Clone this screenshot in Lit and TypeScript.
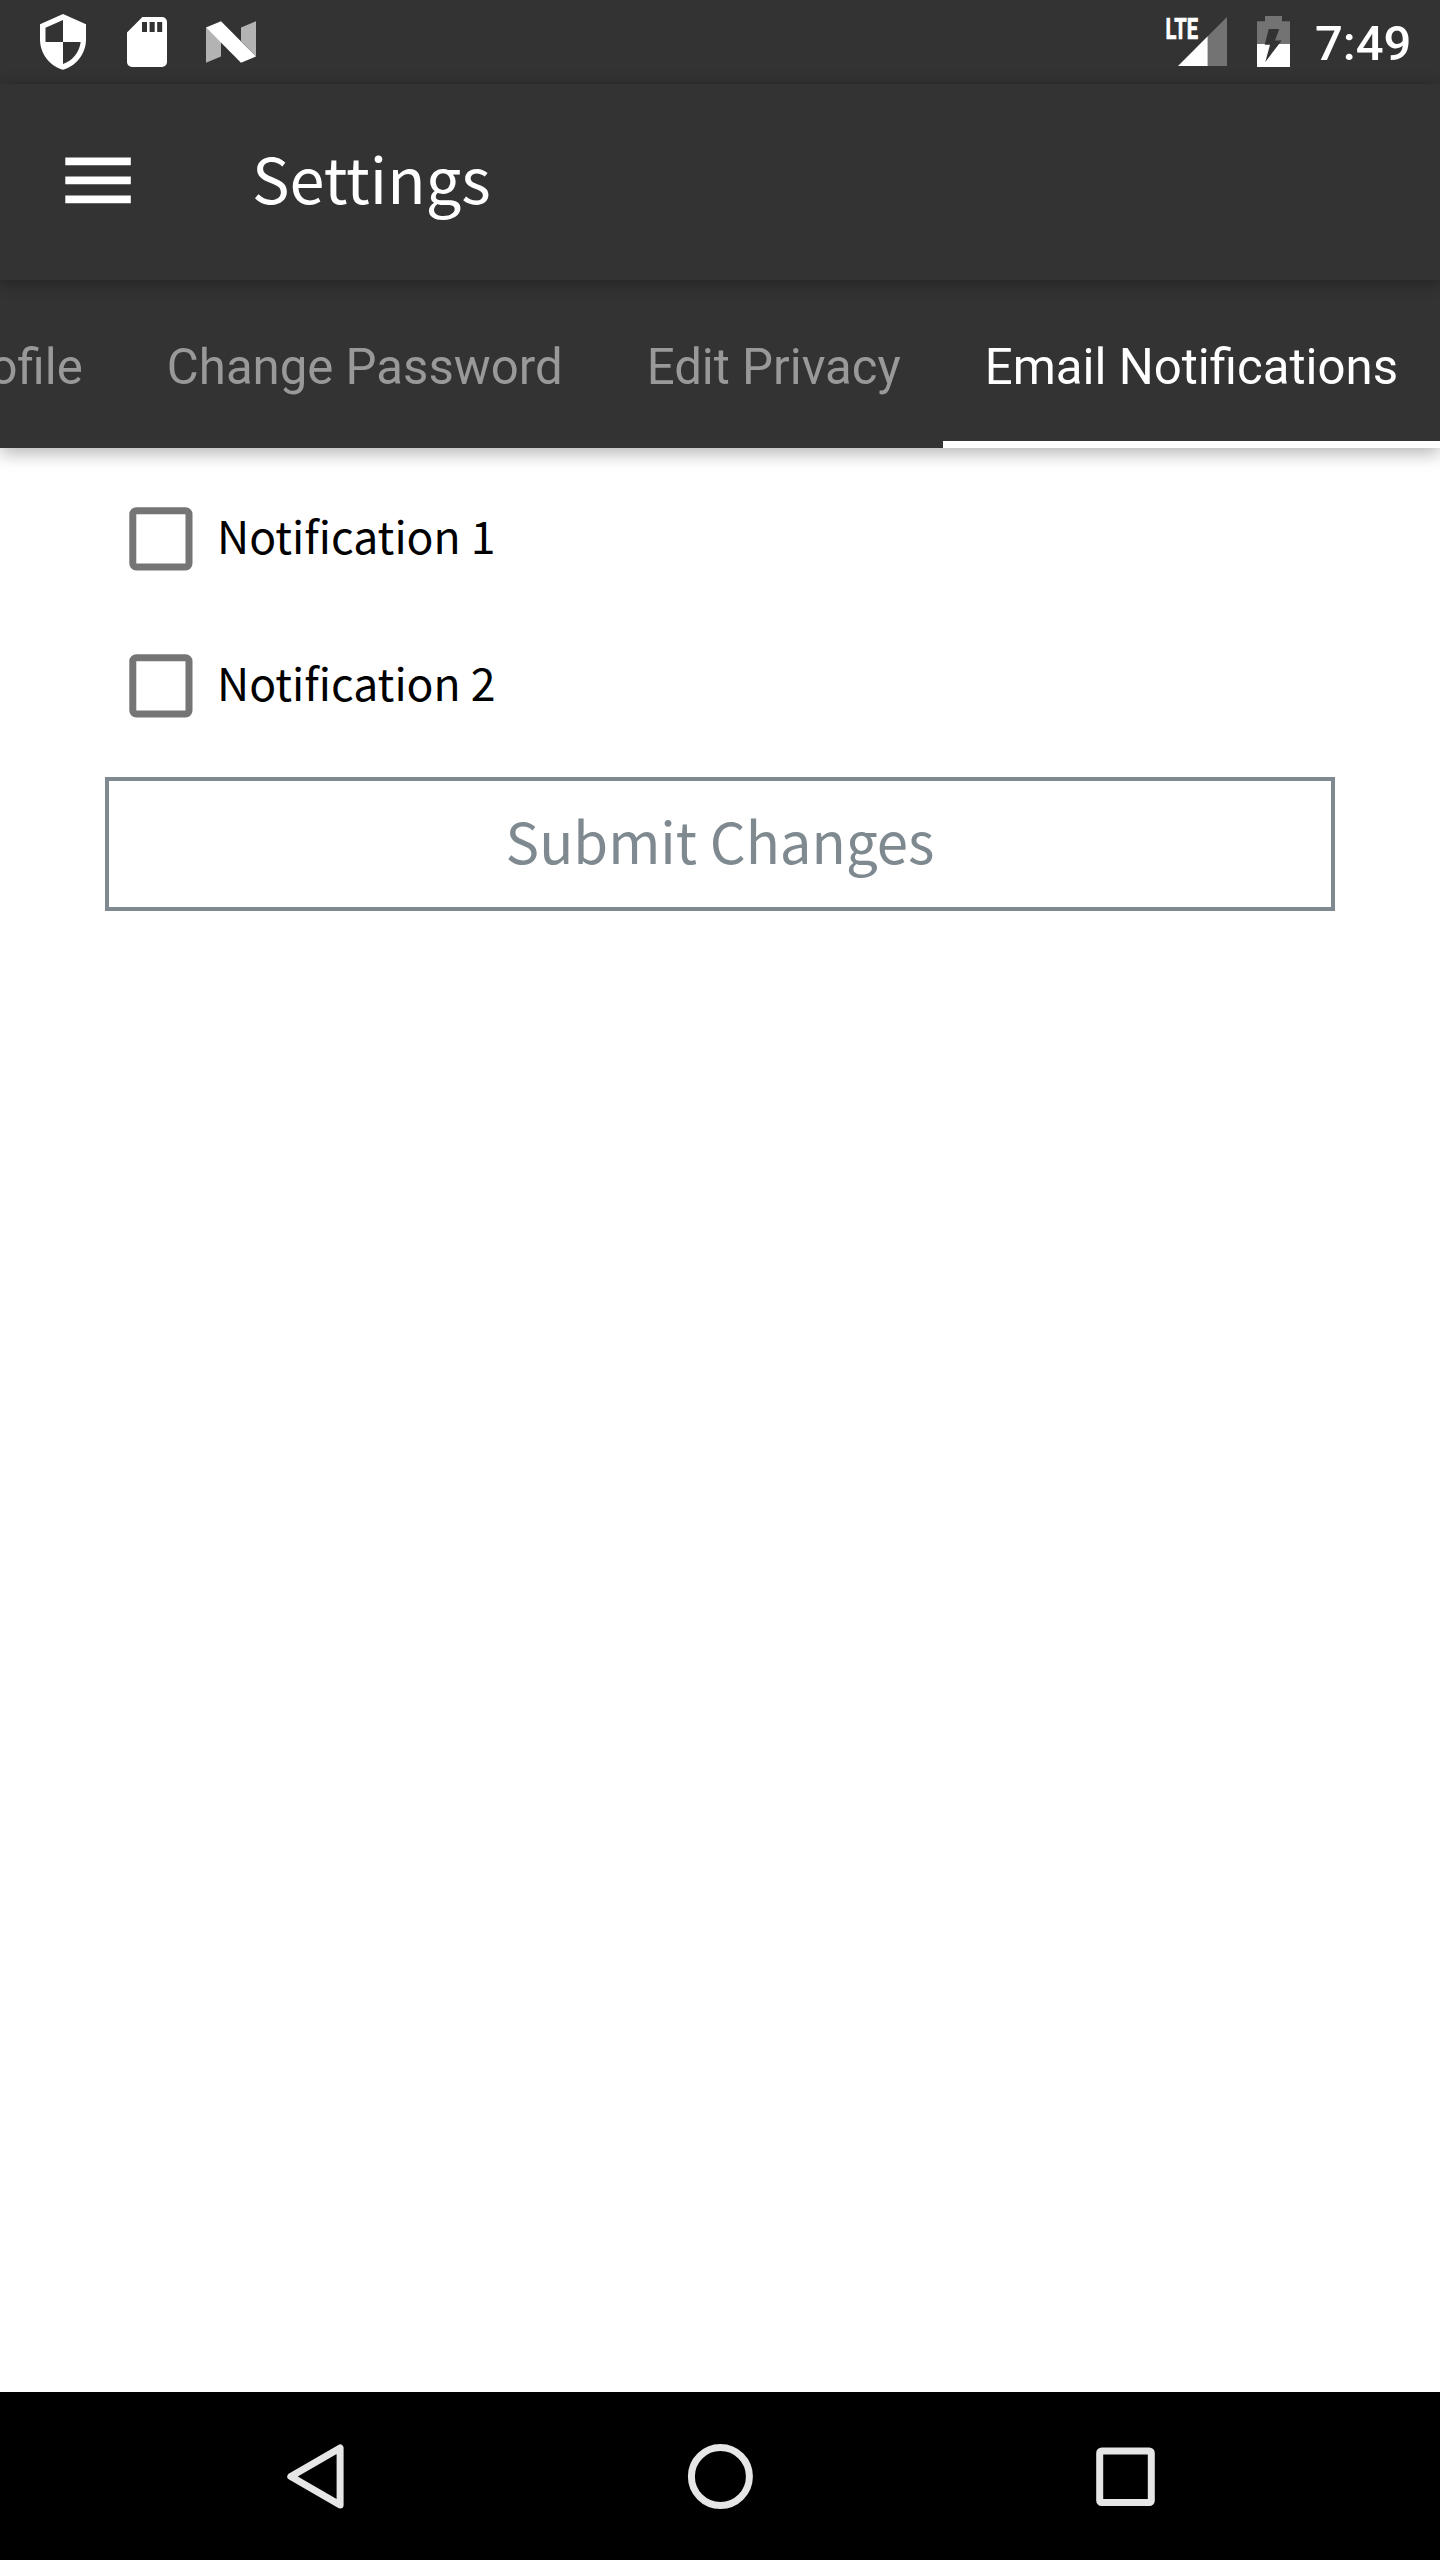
import { LitElement, html, css } from "lit";
import { customElement, state } from "lit/decorators.js";

@customElement("status-bar")
class StatusBar extends LitElement {
  static styles = css`
    :host { display: flex; justify-content: space-between; height: 84px; background: #333; }
    .icons { display: block; }
    .right { display: flex; }
    .lte { font: 700 29.5px Roboto, sans-serif; fill: #fff; stroke: #fff; stroke-width: 0.7px; }
    .clock {
      width: 126px; box-sizing: border-box; padding: 15px 0 0 1px;
      font: 500 49px/58px Roboto, sans-serif; color: #fff; white-space: nowrap;
    }
  `;
  render() {
    return html`
      <svg class="icons" width="280" height="84" viewBox="0 0 280 84">
        <path fill="#fff" fill-rule="evenodd" d="M63 14L86 24.2V39.5C86 53.5 76.3 66 63 69.7C49.7 66 40 53.5 40 39.5V24.2ZM63 20L45.5 27.7V42H63ZM63 42V64C72.5 61 79.2 52.5 80.7 42Z"/>
        <path fill="#fff" fill-rule="evenodd" d="M142.4 17H162a5 5 0 0 1 5 5V62a5 5 0 0 1-5 5H132a5 5 0 0 1-5-5V32.4ZM142 22V32H147V22ZM149.6 22V32H154.7V22ZM157.2 22V32H162.2V22Z"/>
        <path fill="#b3b3b3" d="M206 27.5L221 42V56.5L206 62.7ZM241 27.5L256 21.2V56.5L241 41Z"/>
        <path fill="#fff" d="M206 27.5L221 21.2L256 56.5L241 62.7Z"/>
      </svg>
      <div class="right">
        <svg class="icons" width="151" height="84" viewBox="1163 0 151 84">
          <path fill="#737373" d="M1207.7 36.3L1227 17V66H1207.7Z"/>
          <path fill="#fff" d="M1178 66L1207.7 36.3V66Z"/>
          <text class="lte" x="1165.5" y="39" textLength="32.5" lengthAdjust="spacingAndGlyphs">LTE</text>
          <path fill="#737373" d="M1265 16H1282V21.3H1290V44H1257V21.3H1265Z"/>
          <path fill="#fff" d="M1257 44H1290V67H1257Z"/>
          <path fill="#333" d="M1268.7 29H1279.3L1275 40.5H1281.7L1265.3 62L1270 44.7H1264.7Z"/>
        </svg>
        <div class="clock">7:49</div>
      </div>
    `;
  }
}

@customElement("app-bar")
class AppBar extends LitElement {
  static styles = css`
    :host {
      display: flex; align-items: center; height: 196px; box-sizing: border-box; padding: 0 0 2px 65px;
      background: #333; position: relative; z-index: 2;
      box-shadow: 0 6px 14px rgba(0, 0, 0, 0.16), 0 0 14px rgba(0, 0, 0, 0.18);
    }
    .menu { display: block; margin-right: 121px; }
    .title { margin: 0; padding-bottom: 8px; font: 400 63px/80px "Noto Sans CJK SC", sans-serif; color: #fff; }
  `;
  render() {
    return html`
      <svg class="menu" width="66" height="48" viewBox="0 0 66 48">
        <path fill="#fff" d="M.3 .4H65.8V8.3H.3ZM.3 19.4H65.8V27.3H.3ZM.3 38.4H65.8V46.3H.3Z"/>
      </svg>
      <h1 class="title">Settings</h1>
    `;
  }
}

@customElement("tab-bar")
class TabBar extends LitElement {
  static styles = css`
    :host {
      display: flex; justify-content: flex-end; height: 168px; overflow: hidden; background: #333;
      font: 400 49.15px/58px Roboto, sans-serif; color: #999;
    }
    .tab {
      flex: none; box-sizing: border-box; padding: 58px 42px 0; white-space: nowrap;
      border-bottom: 7px solid transparent;
    }
    .active { color: #fff; border-bottom-color: #fff; }
  `;
  render() {
    const tabs = ["Edit Profile", "Change Password", "Edit Privacy", "Email Notifications"];
    return tabs.map((t, i) => html`<div class="tab ${i === 3 ? "active" : ""}">${t}</div>`);
  }
}

@customElement("nav-bar")
class NavBar extends LitElement {
  static styles = css`
    :host { display: flex; height: 168px; background: #000; }
    .keys { display: block; }
  `;
  render() {
    return html`
      <svg class="keys" width="1440" height="168" viewBox="0 0 1440 168" fill="none" stroke="#e6e6e6" stroke-width="7" stroke-linejoin="round">
        <path d="M340.1 56V113L290.8 84.5Z"/>
        <circle cx="720.4" cy="84.5" r="29"/>
        <rect x="1099.7" y="58.9" width="51.6" height="51.6" rx="2"/>
      </svg>
    `;
  }
}

@customElement("app-root")
class AppRoot extends LitElement {
  static styles = css`
    :host { display: flex; flex-direction: column; width: 1440px; height: 2560px; background: #fff; overflow: hidden; }
    .tabs { position: relative; z-index: 1; box-shadow: 0 6px 16px rgba(0, 0, 0, 0.28); }
    .content { flex: 1; padding: 59px 105px 0; font-family: "Noto Sans CJK SC", sans-serif; }
    .row { display: flex; height: 64px; margin-bottom: 83px; padding-left: 24px; }
    .row.last { margin-bottom: 59px; }
    .box { display: block; width: 64px; height: 64px; margin-right: 24px; }
    .label { font-size: 44.5px; line-height: 56px; color: #000; }
    .submit {
      display: block; width: 1230px; height: 134px; box-sizing: border-box; padding: 0 0 8px;
      border: 4px solid #7f8990; background: #fff; color: #7f8990;
      font: 400 56.35px/118px "Noto Sans CJK SC", sans-serif; text-align: center;
    }
  `;
  @state() items = ["Notification 1", "Notification 2"];
  render() {
    return html`
      <status-bar></status-bar>
      <app-bar></app-bar>
      <tab-bar class="tabs"></tab-bar>
      <main class="content">
        ${this.items.map((label, i) => html`
          <div class="row ${i === this.items.length - 1 ? "last" : ""}">
            <svg class="box" viewBox="0 0 64 64" fill="none" stroke="#757575" stroke-width="7">
              <rect x="3.8" y="3.8" width="56.2" height="56.2" rx="3.5"/>
            </svg>
            <span class="label">${label}</span>
          </div>`)}
        <button class="submit">Submit Changes</button>
      </main>
      <nav-bar></nav-bar>
    `;
  }
}
